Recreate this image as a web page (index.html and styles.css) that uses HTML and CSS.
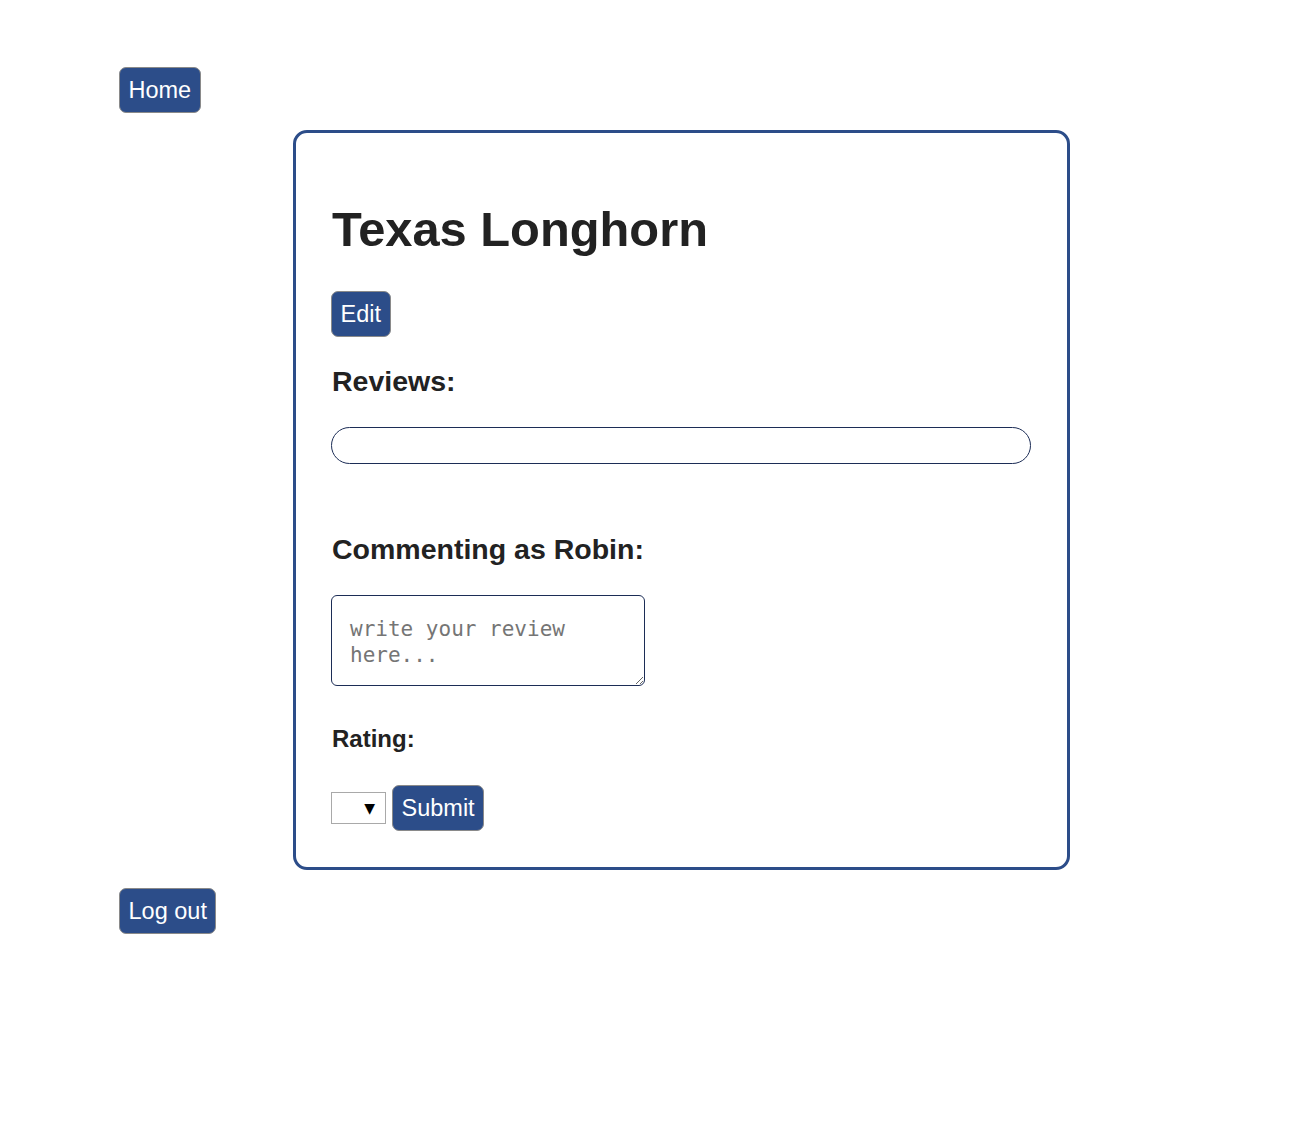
FILE: index.html
```html
<!DOCTYPE html>
<html lang="en">
<head>
<meta charset="utf-8">
<title>Texas Longhorn</title>
<link rel="stylesheet" href="styles.css">
</head>
<body>
<div class="page">
  <nav class="top"><button class="btn">Home</button></nav>
  <main class="card">
    <h1 class="title">Texas Longhorn</h1>
    <button class="btn">Edit</button>
    <h3 class="heading">Reviews:</h3>
    <div class="reviews"></div>
    <h3 class="heading commenting">Commenting as Robin:</h3>
    <textarea class="review-input" placeholder="write your review here..."></textarea>
    <label class="rating-label">Rating:</label>
    <div class="submit-row">
      <span class="select-wrap">
        <select class="rating-select">
          <option></option>
          <option>1</option>
          <option>2</option>
          <option>3</option>
          <option>4</option>
          <option>5</option>
        </select>
      </span>
      <button class="btn">Submit</button>
    </div>
  </main>
  <div class="bottom"><button class="btn">Log out</button></div>
</div>
</body>
</html>
```
FILE: styles.css
```css
* { box-sizing: border-box; }
body {
  margin: 0;
  font-family: "Liberation Sans", Arial, sans-serif;
  font-size: 24px;
  color: #222;
  background: #fff;
}
.page {
  padding: 67px 0 0 119px;
  display: flex;
  flex-direction: column;
  align-items: flex-start;
}
.btn {
  font-family: "Liberation Sans", Arial, sans-serif;
  font-size: 23.5px;
  line-height: 28px;
  color: #fff;
  background: #2c4d89;
  border: 1px solid #8a8a8a;
  border-radius: 7px;
  padding: 8px 8.5px;
  cursor: pointer;
}
.top { margin-bottom: 17px; }
.card {
  margin-left: 174px;
  width: 777px;
  border: 3px solid #2c4d89;
  border-radius: 14px;
  padding: 36px 36px 36px 35px;
  display: flex;
  flex-direction: column;
  align-items: flex-start;
}
.title {
  font-size: 48.8px;
  line-height: 55px;
  font-weight: bold;
  margin: 33px 0 34px 1px;
}
.heading {
  font-size: 28.5px;
  line-height: 32px;
  font-weight: bold;
  margin: 28px 0 30px 1px;
}
.commenting { margin: 0 0 30px 1px; }
.reviews {
  width: 700px;
  height: 37px;
  border: 1px solid #1c2d56;
  border-radius: 19px;
  margin-bottom: 69px;
}
.review-input {
  width: 314px;
  height: 91px;
  border: 1px solid #1c2d56;
  border-radius: 6px;
  padding: 20px 17px 10px 18px;
  font-family: "DejaVu Sans Mono", "Liberation Mono", monospace;
  font-size: 21px;
  line-height: 26px;
  color: #333;
  resize: both;
  margin: 0 0 39px;
}
.review-input::placeholder { color: #757575; }
.rating-label {
  font-weight: bold;
  font-size: 24px;
  line-height: 28px;
  margin-bottom: 32px;
  margin-left: 1px;
}
.submit-row {
  display: flex;
  align-items: center;
  gap: 6px;
}
.select-wrap {
  position: relative;
  display: inline-block;
}
.rating-select {
  appearance: none;
  -webkit-appearance: none;
  width: 55px;
  height: 32px;
  border: 1px solid #a9a9a9;
  border-radius: 0;
  background: #fff;
  font-family: "Liberation Sans", Arial, sans-serif;
  font-size: 16px;
  display: block;
}
.select-wrap::after {
  content: "\25BC";
  position: absolute;
  right: 11px;
  top: 6px;
  font-family: "DejaVu Sans", sans-serif;
  font-size: 14px;
  line-height: 20px;
  color: #000;
  pointer-events: none;
}
.bottom { margin-top: 18px; }
```
